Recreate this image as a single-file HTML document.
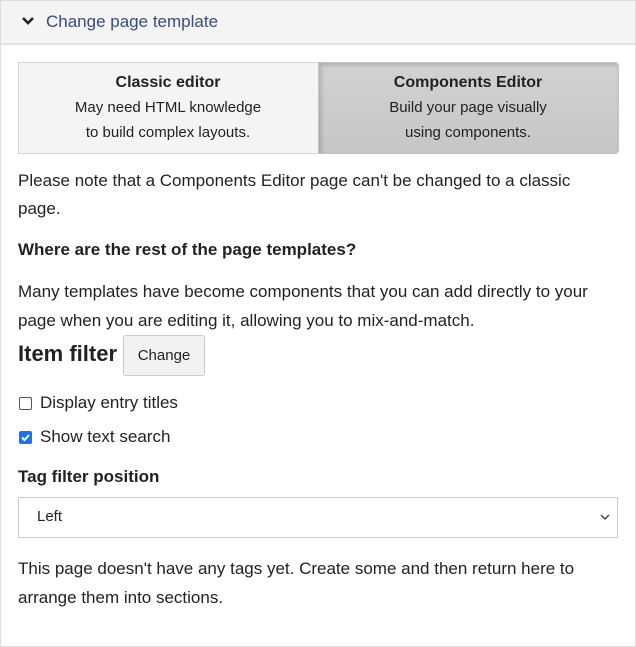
<!DOCTYPE html>
<html><head><style>
body{margin:0;width:636px;height:647px;position:relative;background:#fff;font-family:"Liberation Sans",sans-serif;color:#222;overflow:hidden}
.a{position:absolute;white-space:nowrap;line-height:20px}
.box{position:absolute;left:0;top:0;width:634px;height:645px;border:1px solid #ddd}
.hd{position:absolute;left:1px;top:1px;width:634px;height:42px;background:#f4f4f4;border-bottom:2px solid #e2e2e2}
.t{font-size:17px}
</style></head><body>
<div class="box"></div>
<div class="hd"></div>
<svg style="position:absolute;left:21px;top:16px" width="14" height="10" viewBox="0 0 14 10"><path d="M2 2 L7 7 L12 2" stroke="#222" stroke-width="2.6" fill="none"/></svg>
<div class="a" style="left:46px;top:12px;font-size:17px;color:#3b4a7a">Change page template</div>
<div style="position:absolute;left:18px;top:62px;width:300px;height:90px;background:#f4f4f4;border:1px solid #d6d6d6;border-right:none"></div>
<div style="position:absolute;left:318px;top:62px;width:299px;height:90px;background:linear-gradient(#d2d2d2,#c6c6c6);border:1px solid #c4c4c4;border-radius:0 4px 4px 0;box-shadow:inset 2px 2px 5px rgba(0,0,0,.18)"></div>
<div class="a" style="left:18px;width:300px;text-align:center;top:73px;font-size:16px;font-weight:bold">Classic editor</div>
<div class="a" style="left:18px;width:300px;text-align:center;top:98px;font-size:15px">May need HTML knowledge</div>
<div class="a" style="left:18px;width:300px;text-align:center;top:123px;font-size:15px">to build complex layouts.</div>
<div class="a" style="left:318px;width:300px;text-align:center;top:73px;font-size:16px;font-weight:bold">Components Editor</div>
<div class="a" style="left:318px;width:300px;text-align:center;top:98px;font-size:15px">Build your page visually</div>
<div class="a" style="left:318px;width:300px;text-align:center;top:123px;font-size:15px">using components.</div>
<div class="a t" style="left:18px;top:171px">Please note that a Components Editor page can't be changed to a classic</div>
<div class="a t" style="left:18px;top:199px">page.</div>
<div class="a t" style="left:18px;top:240px;font-weight:bold">Where are the rest of the page templates?</div>
<div class="a t" style="left:18px;top:282px">Many templates have become components that you can add directly to your</div>
<div class="a t" style="left:18px;top:311px">page when you are editing it, allowing you to mix-and-match.</div>
<div class="a" style="left:18px;top:342px;font-size:22px;font-weight:bold;line-height:24px">Item filter</div>
<div style="position:absolute;left:123px;top:335px;width:80px;height:39px;background:#f2f2f2;border:1px solid #ccc;border-radius:3px;font-size:15px;line-height:39px;text-align:center">Change</div>
<div style="position:absolute;left:19px;top:397px;width:11px;height:11px;border:1px solid #555;border-radius:2px"></div>
<div class="a t" style="left:40px;top:393px">Display entry titles</div>
<div style="position:absolute;left:19px;top:431px;width:13px;height:13px;background:#1a73e8;border-radius:2px"><svg width="13" height="13" viewBox="0 0 13 13" style="position:absolute;left:0;top:0"><path d="M3 6.5 L5.5 9 L10 4" stroke="#fff" stroke-width="2" fill="none"/></svg></div>
<div class="a t" style="left:40px;top:427px">Show text search</div>
<div class="a t" style="left:18px;top:467px;font-weight:bold">Tag filter position</div>
<div style="position:absolute;left:18px;top:497px;width:598px;height:39px;border:1px solid #ccc"></div>
<div class="a" style="left:37px;top:507px;font-size:15px">Left</div>
<svg style="position:absolute;left:600px;top:514px" width="10" height="6" viewBox="0 0 10 6"><path d="M1 1 L5 5 L9 1" stroke="#333" stroke-width="1.3" fill="none"/></svg>
<div class="a t" style="left:18px;top:559px">This page doesn't have any tags yet. Create some and then return here to</div>
<div class="a t" style="left:18px;top:588px">arrange them into sections.</div>
</body></html>
